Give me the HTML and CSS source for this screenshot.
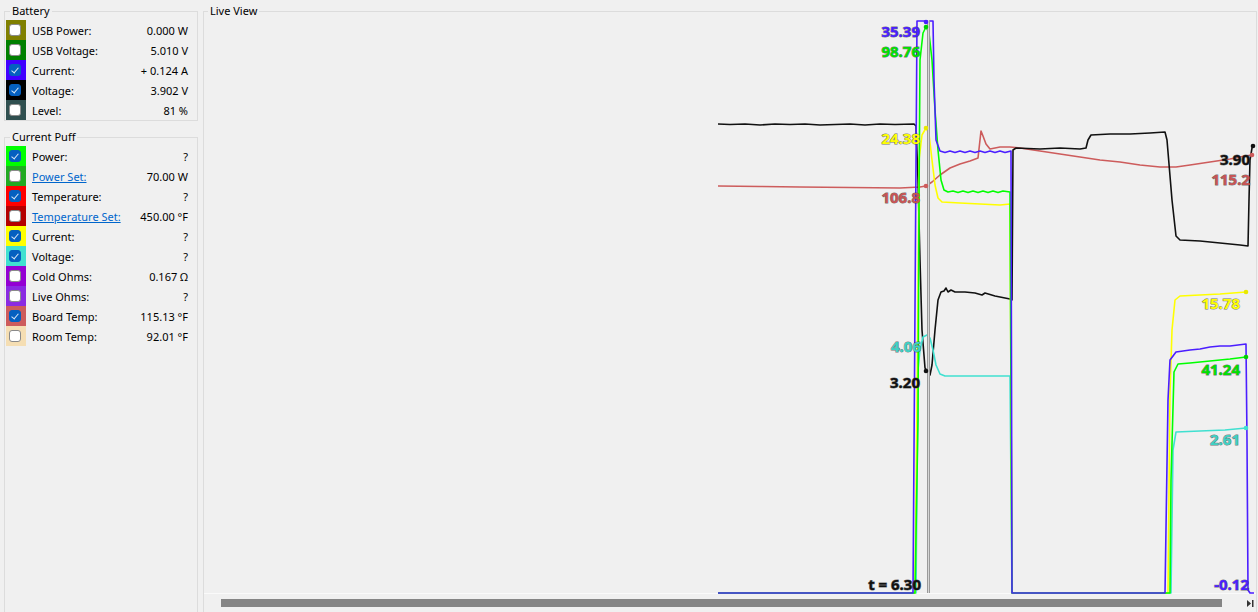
FILE: index.html
```html
<!DOCTYPE html>
<html lang="en">
<head>
    <meta charset="UTF-8">
    <title>Live View</title>
    <link rel="stylesheet" href="styles.css">
</head>
<body>
<div class="app">

    <!-- Panel izquierdo -->
    <aside class="sidebar">
        <fieldset class="group group-battery">
            <legend>Battery</legend>
            <div class="row"><span class="swatch sw-olive"><span class="check"></span></span><span class="name">USB Power:</span><span class="value">0.000 W</span></div>
            <div class="row"><span class="swatch sw-green"><span class="check"></span></span><span class="name">USB Voltage:</span><span class="value">5.010 V</span></div>
            <div class="row"><span class="swatch sw-blue"><span class="check on"></span></span><span class="name">Current:</span><span class="value">+ 0.124 A</span></div>
            <div class="row"><span class="swatch sw-black"><span class="check on"></span></span><span class="name">Voltage:</span><span class="value">3.902 V</span></div>
            <div class="row"><span class="swatch sw-slate"><span class="check"></span></span><span class="name">Level:</span><span class="value">81 %</span></div>
        </fieldset>

        <fieldset class="group group-puff">
            <legend>Current Puff</legend>
            <div class="row"><span class="swatch sw-lime"><span class="check on"></span></span><span class="name">Power:</span><span class="value">?</span></div>
            <div class="row"><span class="swatch sw-limegreen"><span class="check"></span></span><span class="name"><a class="link">Power Set:</a></span><span class="value">70.00 W</span></div>
            <div class="row"><span class="swatch sw-red"><span class="check on"></span></span><span class="name">Temperature:</span><span class="value">?</span></div>
            <div class="row"><span class="swatch sw-darkred"><span class="check"></span></span><span class="name"><a class="link">Temperature Set:</a></span><span class="value">450.00 °F</span></div>
            <div class="row"><span class="swatch sw-yellow"><span class="check on"></span></span><span class="name">Current:</span><span class="value">?</span></div>
            <div class="row"><span class="swatch sw-turquoise"><span class="check on"></span></span><span class="name">Voltage:</span><span class="value">?</span></div>
            <div class="row"><span class="swatch sw-darkviolet"><span class="check"></span></span><span class="name">Cold Ohms:</span><span class="value">0.167 Ω</span></div>
            <div class="row"><span class="swatch sw-blueviolet"><span class="check"></span></span><span class="name">Live Ohms:</span><span class="value">?</span></div>
            <div class="row"><span class="swatch sw-indianred"><span class="check on"></span></span><span class="name">Board Temp:</span><span class="value">115.13 °F</span></div>
            <div class="row"><span class="swatch sw-wheat"><span class="check"></span></span><span class="name">Room Temp:</span><span class="value">92.01 °F</span></div>
        </fieldset>
    </aside>

    <!-- Gráfico en vivo -->
    <fieldset class="group live">
        <legend>Live View</legend>
        <svg class="chart" width="1052" height="574" viewBox="204 19 1052 574">
            <g class="series" fill="none" stroke-width="1.6" stroke-linejoin="round">
                <path stroke="#cd5c5c" d="M718,186 L760,186.5 L800,187 L850,187.5 L900,188 L920,187 L926,186 L932,182 L940,175 L950,168 L960,164 L970,161 L978,158 L980,140 L981,131 L983,136 L986,144 L990,149 L1000,147 L1010,147 L1020,148 L1040,151 L1060,154 L1080,157 L1100,160 L1120,162 L1140,165 L1160,167 L1176,167 L1190,165 L1210,162 L1230,159 L1245,156 L1252,155"/>
                <path stroke="#111" d="M718,124 L730,124.5 L745,124 L760,125 L775,124 L790,124.5 L805,124 L820,125 L835,124.5 L850,124 L865,125 L880,124 L895,124.5 L914,124 L916,126 L918,180 L920,260 L922,330 L925,368 L928,372 L930,375 L932,365 L935,330 L938,300 L941,292 L944,291 L946,288 L948,292 L951,290 L955,292 L965,292 L975,293 L982,295 L985,293 L995,296 L1005,298 L1010,299 L1012,300 L1013,150 L1016,148 L1040,149 L1060,148 L1080,149 L1086,148 L1088,140 L1091,135 L1110,134 L1130,134 L1150,133 L1165,132 L1167,140 L1172,200 L1176,236 L1180,240 L1200,241 L1220,243 L1240,245 L1248,246 L1249,200 L1250,160 L1252,148 L1254,146"/>
                <path stroke="#40e0d0" d="M718,593 L916,593 L918,370 L920,350 L923,337 L927,335 L930,338 L933,350 L936,365 L940,374 L945,376 L970,376 L990,376 L1010,376 L1012,593 L1171,593 L1173,450 L1176,432 L1200,431 L1225,430 L1246,428"/>
                <path stroke="#ffff00" d="M718,593 L915,593 L917,400 L918,300 L919,160 L922,135 L926,128 L929,134 L932,160 L935,185 L938,198 L942,202 L960,203 L980,204 L1000,205 L1010,204 L1012,593 L1168,593 L1170,393 L1172,330 L1175,300 L1180,296 L1200,295 L1220,294 L1246,292"/>
                <path stroke="#00ff00" d="M718,593 L915,593 L918,420 L919,200 L920,60 L923,33 L926,27 L929,33 L932,60 L935,110 L938,150 L941,180 L944,190 L948,192 L953,191 L958,192.5 L963,191 L968,192.5 L973,191 L978,192.5 L983,191 L988,192.5 L993,191 L998,192.5 L1003,191 L1010,192 L1012,593 L1170,593 L1171,480 L1174,372 L1178,364 L1190,363 L1210,361 L1230,359 L1246,357"/>
                <path stroke="#4b1eff" d="M718,593 L913,593 L917,21 L933,21 L934,80 L936,140 L940,151 L945,152.5 L950,151 L955,152.5 L960,151 L965,152.5 L970,151 L975,152.5 L980,151 L985,152.5 L990,151 L995,152.5 L1000,151 L1005,152.5 L1011,151 L1012,593 L1165,593 L1168,400 L1170,360 L1176,352 L1190,350 L1200,349 L1210,347 L1220,346 L1230,346 L1246,344 L1247,440 L1248,590 L1250,593 L1254,593"/>
            </g>
            <!-- cursor -->
            <path d="M928.5,20 V593" stroke="#9a9a9a" stroke-width="3"/>
            <path d="M928.5,20 V593" stroke="#d6d6d6" stroke-width="1"/>
            <g class="dots">
                <circle cx="926" cy="22" r="2.3" fill="#4b1eff"/>
                <circle cx="926" cy="27" r="2.3" fill="#00d000"/>
                <circle cx="926" cy="128" r="2.3" fill="#e8e800"/>
                <circle cx="926" cy="186" r="2.3" fill="#cd5c5c"/>
                <circle cx="926" cy="371" r="2.3" fill="#111"/>
                <circle cx="1246" cy="292" r="2.3" fill="#e8e800"/>
                <circle cx="1246" cy="357" r="2.3" fill="#00d000"/>
                <circle cx="1246" cy="428" r="2.3" fill="#40e0d0"/>
                <circle cx="1252" cy="155" r="2.3" fill="#cd5c5c"/>
                <circle cx="1253" cy="146" r="2.3" fill="#111"/>
            </g>
            <g class="labels" text-anchor="end">
                <text x="920" y="37" fill="#4b1eff">35.39</text>
                <text x="920" y="57" fill="#00e000">98.76</text>
                <text x="920" y="144" fill="#ffff00">24.38</text>
                <text x="920" y="203" fill="#c85454">106.8</text>
                <text x="921" y="352" fill="#40d0c4">4.06</text>
                <text x="920" y="388" fill="#111">3.20</text>
                <text x="1250" y="165" fill="#111">3.90</text>
                <text x="1250" y="185" fill="#c85454">115.2</text>
                <text x="1240" y="309" fill="#ffff00">15.78</text>
                <text x="1240" y="375" fill="#00e000">41.24</text>
                <text x="1240" y="445" fill="#40d0c4">2.61</text>
                <text x="921" y="590" fill="#111">t = 6.30</text>
                <text x="1249" y="590" fill="#4b1eff">-0.12</text>
            </g>
        </svg>
        <div class="hscroll">
            <div class="thumb"></div>
            <svg class="end-btn" width="7" height="7" viewBox="0 0 7 7">
                <polygon points="0,0 4,3.5 0,7" fill="#333"/>
                <rect x="5" y="0" width="1.5" height="7" fill="#333"/>
            </svg>
        </div>
    </fieldset>

</div>
</body>
</html>
```

FILE: styles.css
```css
/* Estilos generales */
body {
    margin: 0;
    padding: 0;
    overflow: hidden;
    background: #f0f0f0;
    font-family: "Noto Sans", "Open Sans", sans-serif;
    font-size: 11px;
    color: #000;
}

.app {
    display: flex;
    width: 1258px;
    height: 612px;
    overflow: hidden;
}

/* Grupos */
.group {
    margin: 0;
    padding: 0;
    min-width: 0;
    border: 1px solid #dcdcdc;
    box-sizing: border-box;
}

.group legend {
    margin-left: 4px;
    padding: 0 2px;
    line-height: 16px;
    font-size: 11px;
}

/* Panel izquierdo */
.sidebar {
    flex: none;
    width: 198px;
    display: flex;
    flex-direction: column;
}

.group-battery {
    margin: 3px 0 0 4px;
    width: 194px;
    padding: 1px 0 0 1px;
}

.group-puff {
    flex: 1;
    margin: 8px 0 -8px 4px;
    width: 194px;
    padding: 1px 0 0 1px;
}

.row {
    display: flex;
    align-items: center;
    height: 20px;
    padding-right: 9px;
}

.swatch {
    flex: none;
    display: flex;
    align-items: center;
    width: 20px;
    height: 20px;
}

.sw-olive { background: #808000; }
.sw-green { background: #008000; }
.sw-blue { background: #4000ff; }
.sw-black { background: #000; }
.sw-slate { background: #2f4f4f; }
.sw-lime { background: #00ff00; }
.sw-limegreen { background: #22aa22; }
.sw-red { background: #ff0000; }
.sw-darkred { background: #b40000; }
.sw-yellow { background: #ffff00; }
.sw-turquoise { background: #40e0d0; }
.sw-darkviolet { background: #9400d3; }
.sw-blueviolet { background: #8a2be2; }
.sw-indianred { background: #cd5c5c; }
.sw-wheat { background: #f5deb3; }

.check {
    position: relative;
    width: 12px;
    height: 12px;
    margin-left: 3px;
    box-sizing: border-box;
    border: 1px solid #8a8a8a;
    border-radius: 3px;
    background: #fff;
}

.check.on {
    background: #0560c0;
    border-color: #0560c0;
}

.check.on::after {
    content: "";
    position: absolute;
    left: 3px;
    top: 1px;
    width: 3px;
    height: 6px;
    border: solid #d8e6f6;
    border-width: 0 1px 1px 0;
    transform: rotate(40deg);
}

.name {
    flex: 1;
    margin-left: 6px;
    white-space: nowrap;
}

.link {
    color: #0066cc;
    text-decoration: underline;
}

.value {
    white-space: nowrap;
}

/* Vista en vivo */
.live {
    flex: none;
    margin: 3px 0 0 5px;
    width: 1054px;
    height: 620px;
}

.chart {
    display: block;
    overflow: visible;
}

.labels text {
    font-family: "Noto Sans", "Open Sans", sans-serif;
    font-size: 15px;
    font-weight: bold;
    stroke: #3a3a3a;
    stroke-width: 1px;
    stroke-opacity: 0.7;
    paint-order: stroke;
}

.hscroll {
    display: flex;
    align-items: flex-start;
    height: 19px;
    border-top: 1px solid #fafafa;
}

.thumb {
    margin: 5px 0 0 17px;
    width: 1001px;
    height: 8px;
    background: #858585;
}

.end-btn {
    margin: 6px 0 0 25px;
}
```
